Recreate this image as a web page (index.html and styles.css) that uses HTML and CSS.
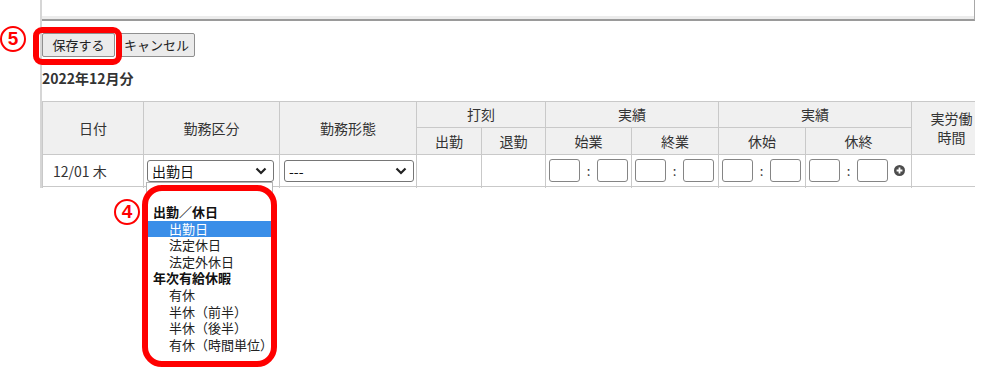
FILE: index.html
```html
<!DOCTYPE html>
<html lang="ja">
<head>
  <meta charset="UTF-8">
  <title>勤務表</title>
  <link rel="stylesheet" href="styles.css">
</head>
<body>
  <span class="mark mark-5">5</span>
  <div class="ring ring-save"></div>

  <div class="sheet">
    <div class="memo"></div>

    <div class="actions">
      <button class="btn btn-save">保存する</button>
      <button class="btn btn-cancel">キャンセル</button>
    </div>

    <h2 class="month">2022年12月分</h2>

    <table class="attendance">
      <colgroup>
        <col style="width:101px">
        <col style="width:136px">
        <col style="width:137px">
        <col style="width:65px">
        <col style="width:64px">
        <col style="width:86px">
        <col style="width:87px">
        <col style="width:87px">
        <col style="width:106px">
        <col style="width:80px">
      </colgroup>
      <thead>
        <tr class="head-top">
          <th rowspan="2">日付</th>
          <th rowspan="2">勤務区分</th>
          <th rowspan="2">勤務形態</th>
          <th colspan="2">打刻</th>
          <th colspan="2">実績</th>
          <th colspan="2">実績</th>
          <th rowspan="2" class="two-line">実労働<br>時間</th>
        </tr>
        <tr class="head-sub">
          <th>出勤</th>
          <th>退勤</th>
          <th>始業</th>
          <th>終業</th>
          <th>休始</th>
          <th>休終</th>
        </tr>
      </thead>
      <tbody>
        <tr class="day-row">
          <td class="date">12/01 木</td>
          <td>
            <div class="select select-kubun">
              <span>出勤日</span>
              <svg width="12" height="8" viewBox="0 0 12 8"><path d="M1.5 1.5 L6 6 L10.5 1.5" fill="none" stroke="#222" stroke-width="2.2"/></svg>
            </div>
          </td>
          <td>
            <div class="select select-keitai">
              <span>---</span>
              <svg width="12" height="8" viewBox="0 0 12 8"><path d="M1.5 1.5 L6 6 L10.5 1.5" fill="none" stroke="#222" stroke-width="2.2"/></svg>
            </div>
          </td>
          <td></td>
          <td></td>
          <td><div class="time"><span class="box"></span><span class="colon">:</span><span class="box"></span></div></td>
          <td><div class="time"><span class="box"></span><span class="colon">:</span><span class="box"></span></div></td>
          <td><div class="time"><span class="box"></span><span class="colon">:</span><span class="box"></span></div></td>
          <td>
            <div class="time">
              <span class="box"></span><span class="colon">:</span><span class="box"></span>
              <svg class="add" width="11" height="11" viewBox="0 0 11 11"><circle cx="5.5" cy="5.5" r="5.5" fill="#4d4d4d"/><path d="M5.5 2.6 V8.4 M2.6 5.5 H8.4" stroke="#fff" stroke-width="1.8"/></svg>
            </div>
          </td>
          <td></td>
        </tr>
        <tr class="next-row">
          <td></td><td></td><td></td><td></td><td></td><td></td><td></td><td></td><td></td><td></td>
        </tr>
      </tbody>
    </table>
  </div>

  <ul class="option-list">
    <li class="group">出勤／休日</li>
    <li class="opt selected">出勤日</li>
    <li class="opt">法定休日</li>
    <li class="opt">法定外休日</li>
    <li class="group">年次有給休暇</li>
    <li class="opt">有休</li>
    <li class="opt">半休（前半）</li>
    <li class="opt">半休（後半）</li>
    <li class="opt">有休（時間単位）</li>
  </ul>
  <div class="ring ring-list"></div>
  <span class="mark mark-4">4</span>
</body>
</html>
```

FILE: styles.css
```css
* { margin: 0; padding: 0; box-sizing: border-box; }

body {
  font-family: "Noto Sans CJK JP", "Noto Sans", sans-serif;
  color: #333;
  background: #fff;
  width: 981px;
  height: 371px;
  overflow: hidden;
}

.sheet {
  margin-left: 40px;
  width: 935px;
  height: 188px;
  border-left: 2px solid #d6d6d6;
  overflow: hidden;
}

.memo {
  height: 21px;
  border-right: 1px solid #a8a8a8;
  border-bottom: 2px solid #9a9a9a;
  box-shadow: inset 0 -3px 0 #ececec;
}

.actions {
  display: flex;
  gap: 3px;
  margin-top: 12px;
}

.btn {
  height: 24px;
  font-family: inherit;
  font-size: 13px;
  line-height: 22px;
  color: #222;
  background: #ebebeb;
  border: 1px solid #8f8f8f;
  border-radius: 2px;
}

.btn-save { width: 73px; }
.btn-cancel { width: 77px; }

.month {
  font-size: 14px;
  font-weight: bold;
  line-height: 20px;
  margin-top: 11px;
  margin-bottom: 13px;
  color: #333;
}

.attendance {
  border-collapse: collapse;
  table-layout: fixed;
  width: 949px;
}

.attendance th,
.attendance td {
  border: 1px solid #c9c9c9;
  padding: 0;
}

.attendance th {
  background: #f0f0f0;
  font-weight: normal;
  font-size: 14px;
  line-height: 19px;
  color: #333;
  text-align: center;
}

.head-top th { height: 26px; }
.head-sub th { height: 27px; }

.day-row td { height: 32px; }
.next-row td { height: 10px; }

.date {
  font-size: 14px;
  padding-left: 10px !important;
}

.select {
  display: flex;
  align-items: center;
  justify-content: space-between;
  height: 22px;
  padding: 0 6px 0 4px;
  background: #fff;
  border: 1px solid #767676;
  border-radius: 3px;
  font-size: 14px;
  color: #111;
}

.select-kubun { width: 127px; margin-left: 3px; }
.select-keitai { width: 130px; margin-left: 4px; }

.time {
  display: flex;
  align-items: center;
  padding-left: 3px;
}

.box {
  width: 31px;
  height: 23px;
  border: 1px solid #858585;
  border-radius: 3px;
  background: #fff;
}

.colon {
  width: 17px;
  text-align: center;
  font-size: 13px;
  line-height: 16px;
}

.add { margin-left: 6px; }

.option-list {
  list-style: none;
  position: absolute;
  left: 146px;
  top: 182px;
  width: 127px;
  height: 175px;
  padding-top: 21px;
  background: #fff;
  border: 1px solid #b5b5b5;
  border-bottom: 0;
  font-size: 13px;
  line-height: 16.6px;
  color: #222;
  overflow: hidden;
}

.option-list .group {
  font-weight: bold;
  padding-left: 6px;
  color: #111;
}

.option-list .opt { padding-left: 22px; }

.option-list .selected {
  background: #3a8ee8;
  color: #fff;
}

.ring {
  position: absolute;
  border: 6px solid #ff0000;
}

.ring-save {
  left: 33px;
  top: 27px;
  width: 89px;
  height: 38px;
  border-radius: 9px;
}

.ring-list {
  left: 142px;
  top: 185px;
  width: 135px;
  height: 182px;
  border-radius: 20px;
}

.mark {
  position: absolute;
  width: 26px;
  height: 26px;
  border: 2.5px solid #ff0000;
  border-radius: 50%;
  color: #ff0000;
  font-family: "Liberation Sans", sans-serif;
  font-weight: bold;
  font-size: 19px;
  line-height: 21px;
  text-align: center;
}

.mark-5 { left: 0; top: 26px; }
.mark-4 { left: 114px; top: 199px; }
```
